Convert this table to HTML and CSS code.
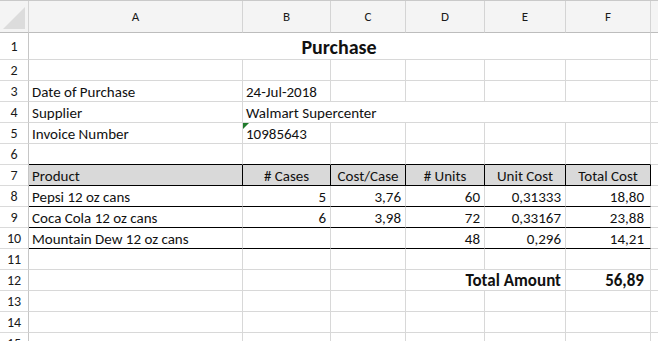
FILE: index.html
```html
<!DOCTYPE html>
<html>
<head>
<meta charset="utf-8">
<link rel="stylesheet" href="styles.css">
</head>
<body>
<div class="sheet">
  <!-- column header row -->
  <div class="corner"><span class="tri"></span></div>
  <div class="ch">A</div><div class="ch">B</div><div class="ch">C</div><div class="ch">D</div><div class="ch">E</div><div class="ch">F</div><div class="ch last"></div>

  <!-- row 1 -->
  <div class="rh">1</div>
  <div class="c title span6">Purchase</div>
  <div class="c g"></div>

  <!-- row 2 -->
  <div class="rh">2</div>
  <div class="c"></div><div class="c"></div><div class="c"></div><div class="c"></div><div class="c"></div><div class="c"></div><div class="c g"></div>

  <!-- row 3 -->
  <div class="rh">3</div>
  <div class="c">Date of Purchase</div><div class="c">24-Jul-2018</div><div class="c"></div><div class="c"></div><div class="c"></div><div class="c"></div><div class="c g"></div>

  <!-- row 4 -->
  <div class="rh">4</div>
  <div class="c">Supplier</div><div class="c span5">Walmart Supercenter</div><div class="c g"></div>

  <!-- row 5 -->
  <div class="rh">5</div>
  <div class="c">Invoice Number</div><div class="c flag">10985643</div><div class="c"></div><div class="c"></div><div class="c"></div><div class="c"></div><div class="c g"></div>

  <!-- row 6 -->
  <div class="rh">6</div>
  <div class="c bb"></div><div class="c bb"></div><div class="c bb"></div><div class="c bb"></div><div class="c bb"></div><div class="c bb"></div><div class="c g"></div>

  <!-- row 7 -->
  <div class="rh">7</div>
  <div class="c th">Product</div><div class="c th ctr">#&nbsp;Cases</div><div class="c th ctr">Cost/Case</div><div class="c th ctr">#&nbsp;Units</div><div class="c th ctr">Unit Cost</div><div class="c th ctr">Total Cost</div><div class="c g"></div>

  <!-- row 8 -->
  <div class="rh">8</div>
  <div class="c bb">Pepsi 12 oz cans</div><div class="c bb num">5</div><div class="c bb num">3,76</div><div class="c bb num">60</div><div class="c bb num">0,31333</div><div class="c bb num f">18,80</div><div class="c g"></div>

  <!-- row 9 -->
  <div class="rh">9</div>
  <div class="c bb">Coca Cola 12 oz cans</div><div class="c bb num">6</div><div class="c bb num">3,98</div><div class="c bb num">72</div><div class="c bb num">0,33167</div><div class="c bb num f">23,88</div><div class="c g"></div>

  <!-- row 10 -->
  <div class="rh">10</div>
  <div class="c bb">Mountain Dew 12 oz cans</div><div class="c bb num"></div><div class="c bb num"></div><div class="c bb num">48</div><div class="c bb num">0,296</div><div class="c bb num f">14,21</div><div class="c g"></div>

  <!-- row 11 -->
  <div class="rh">11</div>
  <div class="c"></div><div class="c"></div><div class="c"></div><div class="c"></div><div class="c"></div><div class="c"></div><div class="c g"></div>

  <!-- row 12 -->
  <div class="rh">12</div>
  <div class="c"></div><div class="c"></div><div class="c"></div><div class="c span2 num bold">Total Amount</div><div class="c num f bold">56,89</div><div class="c g"></div>

  <!-- row 13 -->
  <div class="rh">13</div>
  <div class="c"></div><div class="c"></div><div class="c"></div><div class="c"></div><div class="c"></div><div class="c"></div><div class="c g"></div>

  <!-- row 14 -->
  <div class="rh">14</div>
  <div class="c"></div><div class="c"></div><div class="c"></div><div class="c"></div><div class="c"></div><div class="c"></div><div class="c g"></div>

  <!-- row 15 -->
  <div class="rh">15</div>
  <div class="c"></div><div class="c"></div><div class="c"></div><div class="c"></div><div class="c"></div><div class="c"></div><div class="c g"></div>
</div>
</body>
</html>
```

FILE: styles.css
```css
html, body {
  margin: 0;
  padding: 0;
  background: #ffffff;
  overflow: hidden;
}

.sheet {
  display: grid;
  grid-template-columns: 29px 214px 88px 75px 79px 81px 85px 1fr;
  grid-template-rows: 32px 27px repeat(14, 21px);
  width: 658px;
  font-family: Carlito, Calibri, Lato, "Liberation Sans", sans-serif;
  font-size: 15px;
  color: #111111;
  border-top: 1px solid #c9c9c9;
  box-sizing: border-box;
}

.corner {
  position: relative;
  background: #f4f4f4;
  border-right: 1px solid #d4d4d4;
  border-bottom: 1px solid #bdbdbd;
}

.tri {
  position: absolute;
  right: 3px;
  bottom: 3px;
  width: 0;
  height: 0;
  border-left: 22px solid transparent;
  border-bottom: 22px solid #dcdcdc;
}

.ch {
  background: #f4f4f4;
  border-right: 1px solid #d4d4d4;
  border-bottom: 1px solid #bdbdbd;
  display: flex;
  align-items: center;
  justify-content: center;
  font-size: 13px;
  color: #1a1a1a;
}

.ch.last {
  border-right: none;
}

.rh {
  background: #ffffff;
  border-right: 1px solid #c6c6c6;
  border-bottom: 1px solid #dadada;
  display: flex;
  align-items: center;
  justify-content: center;
  font-size: 14px;
  color: #1a1a1a;
}

.c {
  position: relative;
  border-right: 1px solid #d8d8d8;
  border-bottom: 1px solid #d8d8d8;
  display: flex;
  align-items: center;
  padding: 1px 4px 0 3px;
  white-space: nowrap;
  min-width: 0;
}

.c.g {
  border-right: none;
}

.span6 { grid-column: span 6; }
.span5 { grid-column: span 5; }
.span2 { grid-column: span 2; }

.title {
  justify-content: center;
  font-weight: bold;
  font-size: 20px;
}

.bb {
  border-bottom-color: #000000;
}

.th {
  background: #d9d9d9;
  border-right-color: #000000;
  border-bottom-color: #000000;
}

.ctr {
  justify-content: center;
  padding-left: 0;
  padding-right: 0;
}

.num {
  justify-content: flex-end;
}

.num.f {
  padding-right: 6px;
}

.bold {
  font-weight: bold;
  font-size: 17px;
}

.flag::before {
  content: "";
  position: absolute;
  left: 0;
  top: 0;
  width: 0;
  height: 0;
  border-top: 6px solid #1f7a2c;
  border-right: 6px solid transparent;
}
```
